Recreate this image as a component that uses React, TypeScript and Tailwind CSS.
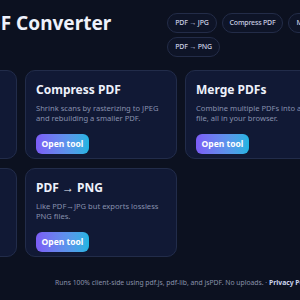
import React from "react";

const cards = [
  { title: "PDF → JPG", desc: "Convert each page of a PDF into high-quality JPEG images." },
  { title: "Compress PDF", desc: "Shrink scans by rasterizing to JPEG and rebuilding a smaller PDF." },
  { title: "Merge PDFs", desc: "Combine multiple PDFs into a single file, all in your browser." },
  { title: "Split PDF", desc: "Extract pages or ranges into separate PDF files." },
  { title: "PDF → PNG", desc: "Like PDF→JPG but exports lossless PNG files." },
];

function Pill({ label }: { label: string }) {
  return (
    <span className="h-[20px] px-[7px] rounded-full border border-[#232c48] bg-[#0e1427] text-[7px] font-medium tracking-[-0.2px] leading-[18px] text-[#c9cee2] whitespace-nowrap">
      {label}
    </span>
  );
}

function Card({ title, desc }: { title: string; desc: string }) {
  return (
    <div className="h-[89px] rounded-[10px] border border-[#222c4a] bg-[#111935] px-[10px] pt-[12px] flex flex-col">
      <div className="text-[12px] leading-[14px] font-bold text-[#eef1fb] whitespace-nowrap">{title}</div>
      <div className="mt-[6px] text-[7.6px] leading-[10px] text-[#8790ad]">{desc}</div>
      <div className="mt-[6px]">
        <button className="h-[20px] w-[53px] rounded-[6px] bg-gradient-to-r from-[#7b5cf6] to-[#1db4e2] text-[8.5px] font-bold text-white">
          Open tool
        </button>
      </div>
    </div>
  );
}

export default function App() {
  return (
    <div
      className="w-[300px] h-[300px] overflow-hidden bg-[#0c1120]"
      style={{ fontFamily: '"Noto Sans", "Open Sans", sans-serif' }}
    >
      <div className="ml-[-135px] w-[472px]">
        <div className="flex items-start pt-[12px]">
          <div className="ml-[110px] text-[19px] leading-[22px] font-bold text-[#eef1fb] whitespace-nowrap">
            PDF Converter
          </div>
          <div className="ml-[56px] flex flex-col gap-y-[4px] pt-[1px]">
            <div className="flex gap-x-[5px]">
              <Pill label="PDF → JPG" />
              <Pill label="Compress PDF" />
              <Pill label="Merge PDFs" />
            </div>
            <div className="flex gap-x-[5px]">
              <Pill label="PDF → PNG" />
            </div>
          </div>
        </div>
        <div className="mt-[13px] grid grid-cols-3 gap-x-[8px] gap-y-[9px]">
          {cards.map((c) => (
            <Card key={c.title} title={c.title} desc={c.desc} />
          ))}
        </div>
        <div className="mt-[21px] pl-[190px] text-[6.8px] text-[#8a92aa] whitespace-nowrap">
          Runs 100% client-side using pdf.js, pdf-lib, and jsPDF. No uploads. ·{" "}
          <span className="font-bold text-[#c9d3ec]">Privacy Policy</span>
        </div>
      </div>
    </div>
  );
}
